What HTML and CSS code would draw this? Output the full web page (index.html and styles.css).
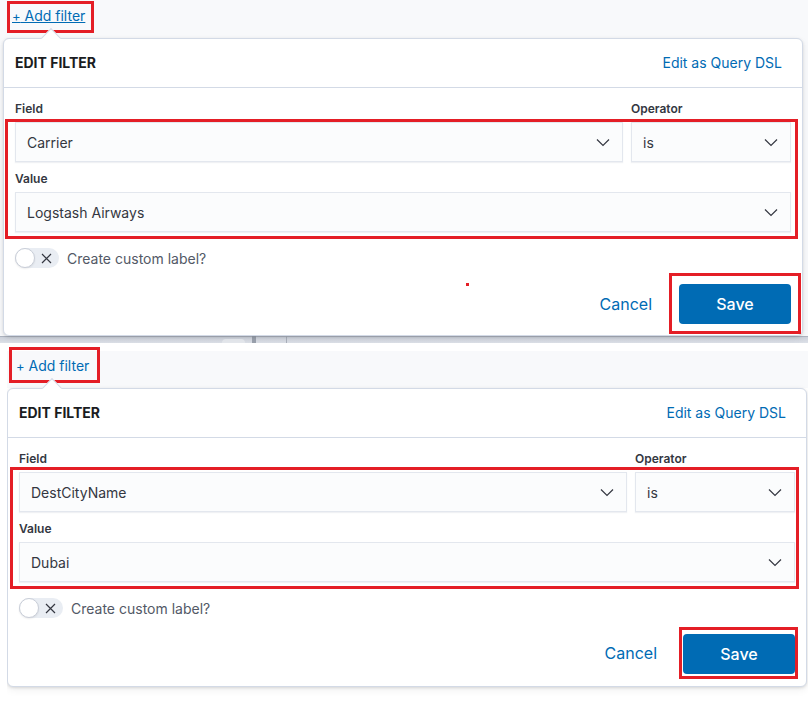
FILE: index.html
```html
<!DOCTYPE html>
<html lang="en">
<head>
<meta charset="utf-8">
<title>Edit filter</title>
<link rel="stylesheet" href="styles.css">
</head>
<body>
<section class="shot shot-one">
  <div class="add-row">
    <a class="mark add-filter add-a is-hover" href="#"><span class="plus">+</span> Add filter</a>
  </div>
  <div class="panel panel-a">
    <span class="arrow"></span>
    <header class="panel-head">
      <h2 class="title">EDIT FILTER</h2>
      <a class="dsl" href="#">Edit as Query DSL</a>
    </header>
    <div class="panel-body">
      <div class="grid labels"><span>Field</span><span>Operator</span></div>
      <div class="mark fields">
        <div class="grid">
          <div class="select"><span>Carrier</span><svg viewBox="0 0 16 16"><polyline points="2,5.5 8,11.5 14,5.5"/></svg></div>
          <div class="select"><span>is</span><svg viewBox="0 0 16 16"><polyline points="2,5.5 8,11.5 14,5.5"/></svg></div>
        </div>
        <div class="value-label">Value</div>
        <div class="select"><span>Logstash Airways</span><svg viewBox="0 0 16 16"><polyline points="2,5.5 8,11.5 14,5.5"/></svg></div>
      </div>
      <div class="toggle-row">
        <span class="switch"><span class="knob"></span><svg viewBox="0 0 11 11"><path d="M1 1 L10 10 M10 1 L1 10"/></svg></span>
        <span class="toggle-label">Create custom label?</span>
      </div>
      <div class="footer">
        <button class="cancel" type="button">Cancel</button>
        <div class="mark save-mark"><button class="save" type="button">Save</button></div>
      </div>
    </div>
    <span class="dot"></span>
  </div>
  <div class="stripe"><span class="pill"></span><span class="block"></span><span class="line"></span></div>
</section>
<section class="shot shot-two">
  <div class="add-row">
    <a class="mark add-filter add-b" href="#"><span class="plus">+</span> Add filter</a>
  </div>
  <div class="panel panel-b">
    <span class="arrow"></span>
    <header class="panel-head">
      <h2 class="title">EDIT FILTER</h2>
      <a class="dsl" href="#">Edit as Query DSL</a>
    </header>
    <div class="panel-body">
      <div class="grid labels"><span>Field</span><span>Operator</span></div>
      <div class="mark fields">
        <div class="grid">
          <div class="select"><span>DestCityName</span><svg viewBox="0 0 16 16"><polyline points="2,5.5 8,11.5 14,5.5"/></svg></div>
          <div class="select"><span>is</span><svg viewBox="0 0 16 16"><polyline points="2,5.5 8,11.5 14,5.5"/></svg></div>
        </div>
        <div class="value-label">Value</div>
        <div class="select"><span>Dubai</span><svg viewBox="0 0 16 16"><polyline points="2,5.5 8,11.5 14,5.5"/></svg></div>
      </div>
      <div class="toggle-row">
        <span class="switch"><span class="knob"></span><svg viewBox="0 0 11 11"><path d="M1 1 L10 10 M10 1 L1 10"/></svg></span>
        <span class="toggle-label">Create custom label?</span>
      </div>
      <div class="footer">
        <button class="cancel" type="button">Cancel</button>
        <div class="mark save-mark"><button class="save" type="button">Save</button></div>
      </div>
    </div>
  </div>
</section>
</body>
</html>
```

FILE: styles.css
```css
* { box-sizing: border-box; }
html, body { margin: 0; padding: 0; }
body {
  width: 808px;
  height: 701px;
  overflow: hidden;
  background: #ffffff;
  font-family: Inter, "Noto Sans", sans-serif;
  color: #343741;
}

.shot { overflow: hidden; display: flex; flex-direction: column; align-items: flex-start; }
.shot-one { height: 343px; background: #f8f9fb; padding: 1px 0 0 3px; }
.shot-two {
  height: 358px;
  margin-left: 7px;
  background: linear-gradient(to bottom, #ffffff 0 8px, #f8f9fb 8px 45px, #ffffff 45px);
}

.add-row { display: flex; }
.mark { border: 3px solid #e41e26; }
.add-filter {
  display: block;
  font-size: 14px;
  line-height: 19px;
  color: #006bb4;
  text-decoration: none;
  overflow: hidden;
}
.add-filter .plus { font-size: 13px; line-height: 1; }
.add-filter.is-hover { text-decoration: underline; }
.add-a { height: 32px; margin-left: 4px; padding: 2px 6px 0 2px; }
.shot-two .add-row { padding-top: 4px; }
.add-b { height: 36px; margin-left: 2px; padding: 6px 8px 0 4px; }

.panel {
  position: relative;
  flex: none;
  width: 800px;
  margin-top: 5px;
  background: #ffffff;
  border: 1px solid #d3dae6;
  border-radius: 6px;
  box-shadow: 0 1px 3px rgba(0, 0, 0, 0.12), 0 3px 8px rgba(0, 0, 0, 0.06);
}
.arrow {
  position: absolute;
  top: -8px;
  left: 40px;
  width: 14px;
  height: 14px;
  background: #ffffff;
  border-top: 1px solid #d3dae6;
  border-left: 1px solid #d3dae6;
  transform: rotate(45deg);
}
.panel-b .arrow { left: 37px; }

.panel-head {
  height: 49px;
  display: flex;
  align-items: center;
  justify-content: space-between;
  padding: 0 20px 2px 11px;
  border-bottom: 1px solid #d3dae6;
}
.title {
  margin: 0;
  font-size: 14px;
  font-weight: 700;
  color: #1a1c21;
}
.dsl { font-size: 14px; color: #006bb4; text-decoration: none; }

.panel-body { padding: 13px 11px 1px; }
.grid { display: grid; grid-template-columns: 1fr 160px; column-gap: 8px; }
.labels, .value-label {
  font-size: 12px;
  font-weight: 600;
  line-height: 16px;
  color: #343741;
}
.labels { margin-bottom: 2px; }
.value-label { margin: 9px 0 5px; }
.fields { margin: 0 -7px 0 -10px; padding: 0 4px 4px 7px; }

.select {
  height: 40px;
  display: flex;
  align-items: center;
  justify-content: space-between;
  padding: 0 11px 0 11px;
  background: #fbfcfd;
  border: 1px solid #e3e7ee;
  box-shadow: 0 1px 1px rgba(152, 162, 179, 0.15);
  font-size: 14px;
  color: #343741;
}
.select svg { width: 16px; height: 16px; flex: none; fill: none; stroke: #343741; stroke-width: 1.2; }

.toggle-row { margin-top: 9px; height: 20px; display: flex; align-items: center; gap: 8px; }
.switch {
  width: 44px;
  height: 20px;
  border-radius: 10px;
  background: #e9edf3;
  display: flex;
  align-items: center;
}
.knob {
  width: 20px;
  height: 20px;
  border-radius: 50%;
  background: #ffffff;
  border: 1px solid #c9ced8;
  box-shadow: 0 1px 2px rgba(0, 0, 0, 0.08);
}
.switch svg { width: 11px; height: 11px; margin-left: 6px; fill: none; stroke: #343741; stroke-width: 1.2; }
.toggle-label { font-size: 14px; color: #535966; }

.footer {
  margin-top: 5px;
  margin-right: -10px;
  display: flex;
  justify-content: flex-end;
  align-items: center;
}
.cancel {
  height: 40px;
  padding: 0 12px;
  margin-right: 5px;
  border: 0;
  background: none;
  font-family: inherit;
  font-size: 16px;
  color: #006bb4;
}
.save-mark { padding: 8px 7px 7px 7px; }
.save {
  display: block;
  width: 112px;
  height: 40px;
  border: 0;
  border-radius: 4px;
  background: #006bb4;
  color: #ffffff;
  font-family: inherit;
  font-size: 16px;
  font-weight: 500;
}

.panel-b .labels { margin-bottom: 0; }
.panel-b .fields { margin: 0 -4px 0 -9px; padding: 2px 1px 4px 6px; }
.panel-b .footer { margin-top: 9px; margin-right: -3px; }
.panel-b .cancel { margin-right: 10px; }
.panel-b .save-mark { padding: 4px 0 2px 1px; }
.panel-b .panel-body { padding-bottom: 7px; }

.dot {
  position: absolute;
  left: 462px;
  top: 244px;
  width: 3px;
  height: 3px;
  background: #e41e26;
}

.stripe {
  align-self: stretch;
  flex: none;
  margin-left: -3px;
  height: 7px;
  display: flex;
  background: linear-gradient(to bottom, #aeb4c0 0 1px, #cdd2db 1px, #dde1e8);
}
.pill { align-self: flex-end; margin-left: 222px; width: 23px; height: 4px; border-radius: 4px 4px 0 0; background: #e6e9ee; }
.block { margin-left: 7px; width: 4px; background: #9aa1ad; }
.line { margin-left: 30px; width: 1px; background: #aab0bb; }
```
